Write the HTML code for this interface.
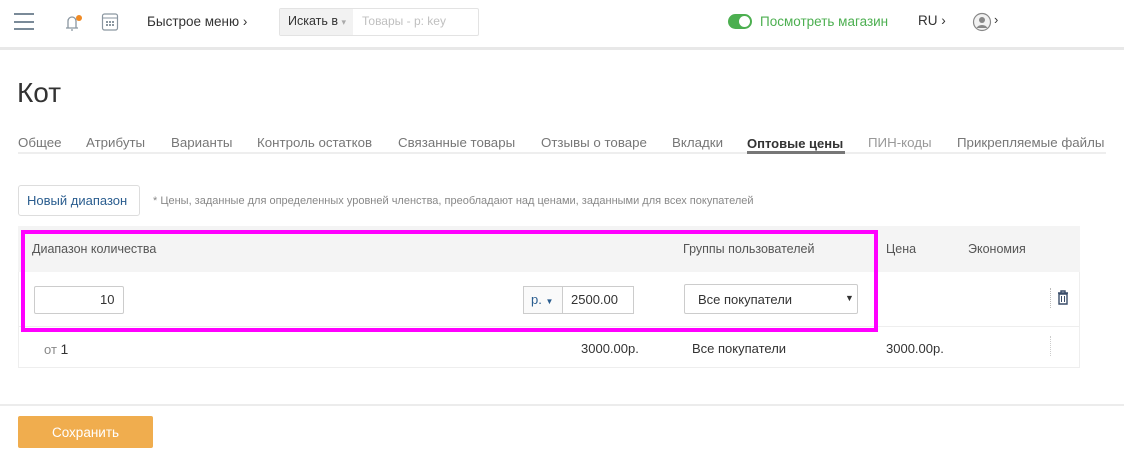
<!DOCTYPE html>
<html><head><meta charset="utf-8"><style>
*{box-sizing:border-box;margin:0;padding:0}
body{width:1124px;height:475px;background:#fff;font-family:"Liberation Sans","DejaVu Sans",sans-serif;color:#333;position:relative;overflow:hidden;font-size:13px}
.a{position:absolute;white-space:nowrap}
.tab{position:absolute;top:135px;font-size:13.3px;color:#777}
</style></head><body>
<div class="a" style="left:0;top:47px;width:1124px;height:3px;background:#e8e8e8"></div>
<div class="a" style="left:14px;top:13px;width:20px;height:2px;background:#7a8a98"></div>
<div class="a" style="left:14px;top:21px;width:20px;height:2px;background:#7a8a98"></div>
<div class="a" style="left:14px;top:28px;width:20px;height:2px;background:#7a8a98"></div>
<svg class="a" style="left:63px;top:12px" width="22" height="20" viewBox="0 0 22 20"><path d="M3 16h12M5 16V9a4 4 0 0 1 8 0v7M8 18h2" fill="none" stroke="#8a96a0" stroke-width="1.3"/><circle cx="16" cy="6" r="3" fill="#f08a24"/></svg>
<svg class="a" style="left:101px;top:12px" width="18" height="20" viewBox="0 0 18 20"><rect x="1.5" y="2" width="15" height="16" rx="2" fill="none" stroke="#8a96a0" stroke-width="1.2"/><path d="M1.5 6h15" stroke="#8a96a0"/><g fill="#8a96a0"><rect x="5" y="9" width="2" height="2"/><rect x="8" y="9" width="2" height="2"/><rect x="11" y="9" width="2" height="2"/><rect x="5" y="12" width="2" height="2"/><rect x="8" y="12" width="2" height="2"/><rect x="11" y="12" width="2" height="2"/></g></svg>
<div class="a" style="left:147px;top:14px;font-size:13.5px;color:#333">Быстрое меню ›</div>
<div class="a" style="left:279px;top:8px;width:200px;height:28px;border:1px solid #e3e3e3;border-radius:2px"></div>
<div class="a" style="left:280px;top:9px;width:73px;height:26px;background:#f2f2f2"></div>
<div class="a" style="left:288px;top:14px;font-size:12.5px;color:#333">Искать в <span style="color:#aaa;font-size:9px">▾</span></div>
<div class="a" style="left:362px;top:14px;font-size:12px;color:#c0c0c0">Товары - р: key</div>
<div class="a" style="left:728px;top:14px;width:24px;height:15px;border-radius:8px;background:#4caf50"></div>
<div class="a" style="left:739px;top:16px;width:11px;height:11px;border-radius:50%;background:#fff"></div>
<div class="a" style="left:760px;top:14px;font-size:13.5px;color:#4caf50">Посмотреть магазин</div>
<div class="a" style="left:918px;top:13px;font-size:13.5px;color:#333">RU ›</div>
<svg class="a" style="left:972px;top:12px" width="20" height="20" viewBox="0 0 20 20"><circle cx="10" cy="10" r="8.5" fill="#f2f2f2" stroke="#888" stroke-width="1.2"/><circle cx="10" cy="8" r="3" fill="#888"/><path d="M4.5 16a6 5 0 0 1 11 0z" fill="#888"/></svg>
<div class="a" style="left:994px;top:12px;font-size:13px;color:#333">›</div>
<div class="a" style="left:17px;top:77px;font-size:28px;color:#333">Кот</div>
<div class="a" style="left:18px;top:152px;width:1088px;height:2px;background:#eee"></div>
<div class="tab" style="left:18px">Общее</div>
<div class="tab" style="left:86px">Атрибуты</div>
<div class="tab" style="left:171px">Варианты</div>
<div class="tab" style="left:257px">Контроль остатков</div>
<div class="tab" style="left:398px">Связанные товары</div>
<div class="tab" style="left:541px">Отзывы о товаре</div>
<div class="tab" style="left:672px">Вкладки</div>
<div class="tab" style="left:747px;color:#333;font-weight:bold;font-size:13px;top:136px">Оптовые цены</div>
<div class="a" style="left:747px;top:151px;width:98px;height:3px;background:#777"></div>
<div class="tab" style="left:868px;color:#999">ПИН-коды</div>
<div class="tab" style="left:957px">Прикрепляемые файлы</div>
<div class="a" style="left:18px;top:185px;width:122px;height:31px;border:1px solid #ddd;border-radius:3px"></div>
<div class="a" style="left:27px;top:193px;font-size:13px;color:#2a5d8f">Новый диапазон</div>
<div class="a" style="left:153px;top:195px;font-size:11px;color:#888">* Цены, заданные для определенных уровней членства, преобладают над ценами, заданными для всех покупателей</div>
<div class="a" style="left:18px;top:226px;width:1062px;height:46px;background:#f4f4f4"></div>
<div class="a" style="left:18px;top:272px;width:1062px;height:96px;border:1px solid #eee;border-top:none"></div>
<div class="a" style="left:18px;top:326px;width:1062px;height:1px;background:#eee"></div>
<div class="a" style="left:32px;top:242px;font-size:12.5px;color:#555">Диапазон количества</div>
<div class="a" style="left:683px;top:242px;font-size:12.5px;color:#555">Группы пользователей</div>
<div class="a" style="left:886px;top:242px;font-size:12.5px;color:#555">Цена</div>
<div class="a" style="left:968px;top:242px;font-size:12.5px;color:#555">Экономия</div>
<div class="a" style="left:34px;top:286px;width:90px;height:28px;border:1px solid #ccc;border-radius:2px"></div>
<div class="a" style="left:100px;top:292px;font-size:13px">10</div>
<div class="a" style="left:523px;top:286px;width:40px;height:28px;border:1px solid #ccc;background:#fafafa"></div>
<div class="a" style="left:531px;top:292px;font-size:13px;color:#2a5d8f">р. <span style="font-size:8px">▼</span></div>
<div class="a" style="left:562px;top:286px;width:72px;height:28px;border:1px solid #ccc"></div>
<div class="a" style="left:571px;top:292px;font-size:13px">2500.00</div>
<div class="a" style="left:684px;top:284px;width:174px;height:30px;border:1px solid #ccc;border-radius:2px"></div>
<div class="a" style="left:698px;top:292px;font-size:13px">Все покупатели</div>
<div class="a" style="left:845px;top:293px;font-size:9px;color:#333">▼</div>
<div class="a" style="left:1050px;top:288px;height:20px;border-left:1px dotted #bbb"></div>
<svg class="a" style="left:1057px;top:290px" width="12" height="15" viewBox="0 0 12 15"><path d="M1 3h10M4 3V1h4v2M2 4h8v10H2z" fill="none" stroke="#3a4d6a" stroke-width="1.4"/><path d="M4.5 6v6M7.5 6v6" stroke="#3a4d6a"/></svg>
<div class="a" style="left:44px;top:341px;font-size:13px;color:#888">от <span style="color:#333;font-size:14px">1</span></div>
<div class="a" style="left:581px;top:341px;font-size:13px">3000.00р.</div>
<div class="a" style="left:692px;top:341px;font-size:13px">Все покупатели</div>
<div class="a" style="left:886px;top:341px;font-size:13px">3000.00р.</div>
<div class="a" style="left:1050px;top:336px;height:20px;border-left:1px dotted #ccc"></div>
<div class="a" style="left:21px;top:230px;width:857px;height:102px;border:4px solid #f0f"></div>
<div class="a" style="left:0;top:404px;width:1124px;height:2px;background:#ececec"></div>
<div class="a" style="left:18px;top:416px;width:135px;height:32px;background:#f0ad4e;border-radius:2px;color:#fff;font-size:13.5px;text-align:center;line-height:33px">Сохранить</div>
</body></html>
